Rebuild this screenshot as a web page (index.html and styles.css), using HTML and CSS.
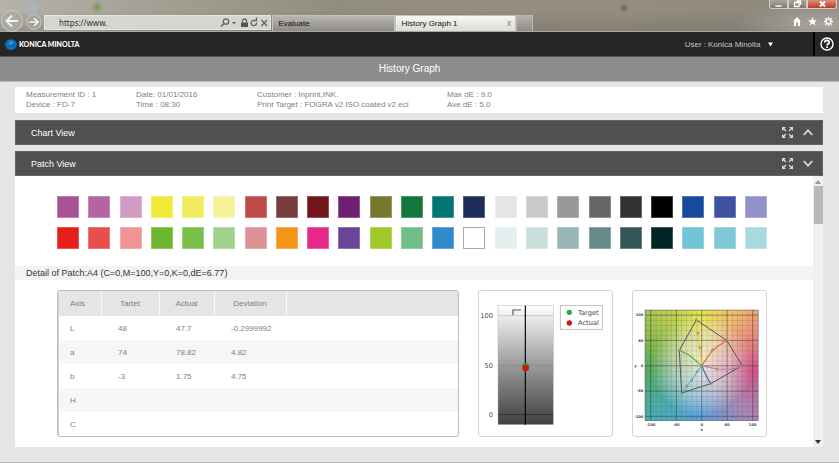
FILE: index.html
```html
<!DOCTYPE html>
<html lang="en">
<head>
<meta charset="utf-8">
<title>History Graph</title>
<link rel="stylesheet" href="styles.css">
</head>
<body>
<header class="chrome">
  <div class="window-buttons">
    <button class="win" aria-label="Minimize"><svg width="17" height="9"><path d="M5 5h7v2h-7z" fill="#fff" stroke="#667" stroke-width=".5"/></svg></button>
    <button class="win" aria-label="Restore"><svg width="17" height="9"><path d="M7.500 1h4v4M5.500 2.500h4.500v4h-4.500z" fill="none" stroke="#fff" stroke-width="1.300"/></svg></button>
    <button class="win win-close" aria-label="Close"><svg width="28" height="9"><path d="M12 1.500l5 5M17 1.500l-5 5" stroke="#fff" stroke-width="2"/></svg></button>
  </div>
  <div class="nav">
    <button class="round back" aria-label="Back"><svg width="22" height="22" viewBox="0 0 22 22"><circle cx="11" cy="11" r="10.500" fill="#aaa9a2" stroke="#cbc9c2"/><path d="M17 11H6M11 5.500L5.500 11l5.500 5.500" fill="none" stroke="#f4f4f0" stroke-width="2"/></svg></button>
    <button class="round" aria-label="Forward"><svg width="16" height="16" viewBox="0 0 16 16"><circle cx="8" cy="8" r="7.300" fill="#a3a29b" stroke="#cbc9c2"/><path d="M3.500 8h8M8 4l4 4-4 4" fill="none" stroke="#f4f4f0" stroke-width="1.600"/></svg></button>
    <div class="address">
      <input type="text" value="https://www." aria-label="Address">
      <svg width="50" height="12" viewBox="0 0 50 12" fill="none" stroke="#66655f" stroke-width="1.300">
        <circle cx="6" cy="4.500" r="2.700"/><path d="M4 6.500L1 9.500" stroke-width="1.600"/>
        <path d="M12 5h4l-2 2.500z" fill="#66655f" stroke="none"/>
        <path d="M21 5.500h7v4.500h-7z" fill="#55544f" stroke="none"/><path d="M22.500 5.500V4a2 2 0 0 1 4 0v1.500"/>
        <path d="M36.500 5.500a2.700 2.700 0 1 1-1.500-2M33.500 3.500h3v-3"/>
        <path d="M41.500 3l5.500 6M47 3l-5.500 6" stroke-width="1.400"/>
      </svg>
    </div>
    <button class="tab">Evaluate</button>
    <button class="tab active">History Graph 1 <span class="tab-close">x</span></button>
    <button class="new-tab" aria-label="New tab"></button>
    <div class="tools">
      <svg width="8" height="9" viewBox="0 0 8 9"><path d="M0 4.500L4 0l4 4.500H7V9H5V5.500H3V9H1V4.500z" fill="#fff"/></svg>
      <svg width="9" height="9" viewBox="0 0 10 10"><path d="M5 0l1.300 3.500H10L7.200 5.800 8.200 9.500 5 7.300 1.800 9.500l1-3.700L0 3.500h3.700z" fill="#fff"/></svg>
      <svg width="9" height="9" viewBox="0 0 10 10" fill="none" stroke="#fff"><circle cx="5" cy="5" r="2.600" stroke-width="1.500"/><path d="M5 0v2M5 8v2M0 5h2M8 5h2M1.300 1.300l1.500 1.500M7.200 7.200l1.500 1.500M1.300 8.700l1.500-1.500M7.200 2.800l1.500-1.500" stroke-width="1.500"/></svg>
    </div>
  </div>
</header>

<div class="appbar">
  <svg class="globe" width="12" height="11" viewBox="0 0 12 11"><ellipse cx="6" cy="5.500" rx="5.800" ry="5.200" fill="#0b78c4"/><path d="M1.500 3h9M.5 4.500h11M.5 6.500h11M1.500 8h9" stroke="#0a5b9c" stroke-width=".6"/><ellipse cx="6" cy="4" rx="2.500" ry="1.800" fill="#2c97dc"/></svg>
  <span class="brand">KONICA MINOLTA</span>
  <div class="user">
    <label for="user">User :</label>
    <select id="user"><option>Konica Minolta</option></select>
    <svg width="5" height="5" viewBox="0 0 6 5"><path d="M0 0h6l-3 5z" fill="#fff"/></svg>
  </div>
  <button class="help" aria-label="Help"><svg width="14" height="14" viewBox="0 0 14 14" fill="none" stroke="#fff"><circle cx="7" cy="7" r="6" stroke-width="1.400"/><path d="M4.800 5.600C4.800 2.700 9.300 2.800 9.200 5.400 9.200 6.800 7.100 6.900 7.100 8.500M7.100 9.500v1.600" stroke-width="1.800"/></svg></button>
</div>
<h1 class="title">History Graph</h1>

<main class="page">
  <section class="info">
    <p>Measurement ID : 1<br>Device : FD-7</p>
    <p>Date: 01/01/2016<br>Time : 08:30</p>
    <p>Customer : Inprint,INK.<br>Print Target : FOGRA v2 ISO coated v2 eci</p>
    <p>Max dE : 9.0<br>Ave dE : 5.0</p>
  </section>

  <section class="bar">
    <h2>Chart View</h2>
    <button aria-label="Full screen"><svg width="11" height="11" viewBox="0 0 11 11" fill="#d8d8d8" stroke="#d8d8d8"><path d="M0 0h4L0 4zM11 0v4L7 0zM0 11V7l4 4zM11 11H7l4-4z" stroke="none"/><path d="M1.500 1.500L4 4M9.500 1.500L7 4M1.500 9.500L4 7M9.500 9.500L7 7" stroke-width="1.300"/></svg></button>
    <button aria-label="Expand"><svg width="10" height="7" viewBox="0 0 10 7"><path d="M.7 6L5 1.300 9.300 6" fill="none" stroke="#d8d8d8" stroke-width="1.800"/></svg></button>
  </section>

  <section class="bar">
    <h2>Patch View</h2>
    <button aria-label="Full screen"><svg width="11" height="11" viewBox="0 0 11 11" fill="#d8d8d8" stroke="#d8d8d8"><path d="M0 0h4L0 4zM11 0v4L7 0zM0 11V7l4 4zM11 11H7l4-4z" stroke="none"/><path d="M1.500 1.500L4 4M9.500 1.500L7 4M1.500 9.500L4 7M9.500 9.500L7 7" stroke-width="1.300"/></svg></button>
    <button aria-label="Collapse"><svg width="10" height="7" viewBox="0 0 10 7"><path d="M.7 1L5 5.700 9.300 1" fill="none" stroke="#d8d8d8" stroke-width="1.800"/></svg></button>
  </section>

  <section class="patch">
    <div class="content">
      <ul class="swatches">
        <li style="background:#aa5297"></li><li style="background:#b464a2"></li><li style="background:#d29bc4"></li><li style="background:#efe938"></li><li style="background:#f1ec5e"></li><li style="background:#f6f29a"></li><li style="background:#be4a4a"></li><li style="background:#783c3c"></li><li style="background:#73161b"></li><li style="background:#6f1f70"></li><li style="background:#75782d"></li><li style="background:#13763b"></li><li style="background:#027574"></li><li style="background:#1d2b57"></li><li style="background:#e5e5e3"></li><li style="background:#cacaca"></li><li style="background:#989898"></li><li style="background:#666"></li><li style="background:#313332"></li><li style="background:#030000"></li><li style="background:#19499c"></li><li style="background:#4053a0"></li><li style="background:#9193c8"></li>
      </ul>
      <ul class="swatches">
        <li style="background:#e71f19"></li><li style="background:#e94d4c"></li><li style="background:#f09393"></li><li style="background:#6ab62d"></li><li style="background:#79bf4a"></li><li style="background:#a1d18c"></li><li style="background:#dd9395"></li><li style="background:#f29518"></li><li style="background:#e62887"></li><li style="background:#684598"></li><li style="background:#9fc928"></li><li style="background:#6fbf85"></li><li style="background:#338acb"></li><li class="outlined" style="background:#fff"></li><li style="background:#e4eeee"></li><li style="background:#cadedc"></li><li style="background:#97b5b5"></li><li style="background:#668a88"></li><li style="background:#335757"></li><li style="background:#022625"></li><li style="background:#71c6d6"></li><li style="background:#7fcad6"></li><li style="background:#a8dae2"></li>
      </ul>
      <h3 class="detail">Detail of Patch:A4 (C=0,M=100,Y=0,K=0,dE=6.77)</h3>
      <div class="panels">
        <div class="card table-card">
          <table>
            <colgroup><col class="c-axis"><col class="c-target"><col class="c-actual"><col class="c-dev"><col></colgroup>
            <thead><tr><th>Axis</th><th>Tartet</th><th>Actual</th><th>Deviation</th><th></th></tr></thead>
            <tbody>
              <tr><td>L</td><td>48</td><td>47.7</td><td>-0.2999992</td><td></td></tr>
              <tr><td>a</td><td>74</td><td>78.82</td><td>4.82</td><td></td></tr>
              <tr><td>b</td><td>-3</td><td>1.75</td><td>4.75</td><td></td></tr>
              <tr><td>H</td><td></td><td></td><td></td><td></td></tr>
              <tr><td>C</td><td></td><td></td><td></td><td></td></tr>
            </tbody>
          </table>
        </div>
        <figure class="card">
          <svg class="plot" viewBox="117 33 399 435">
            <defs><linearGradient id="light" x1="0" y1="0" x2="0" y2="1"><stop offset="0" stop-color="#fff"/><stop offset=".5" stop-color="#9a9a9a"/><stop offset="1" stop-color="#404040"/></linearGradient></defs>
            <rect x="174" y="77" width="166" height="357" fill="url(#light)" stroke="#b5b5b5" stroke-width="1.500"/>
            <path d="M174 107h166M174 256h166" stroke="#777" stroke-opacity=".6" stroke-width="1.500"/>
            <path d="M174 404h166" stroke="#222" stroke-width="2"/>
            <path d="M256 77v357" stroke="#000" stroke-width="3.500"/>
            <path d="M219 105V90h24" fill="none" stroke="#555" stroke-width="3.500"/>
            <circle cx="257" cy="260" r="11" fill="#27a52d"/><circle cx="257" cy="264" r="9.500" fill="#cf1518"/>
            <g class="scale"><text x="159" y="114">100</text><text x="159" y="263">50</text><text x="159" y="411">0</text></g>
            <rect x="361" y="77" width="126" height="71" fill="#fff" stroke="#b4b4b4" stroke-width="2.500"/>
            <circle cx="388" cy="97" r="8" fill="#2fae35"/><circle cx="388" cy="129" r="8" fill="#cf1518"/>
            <g class="legend"><text x="414" y="104">Target</text><text x="414" y="136">Actual</text></g>
          </svg>
        </figure>
        <figure class="card">
          <svg class="plot gamut" viewBox="39 33 399 435">
            <defs><pattern id="grid" width="15.270" height="15.220" x="92" y="105" patternUnits="userSpaceOnUse"><path d="M0 0H16M0 0V16" fill="none" stroke="#444" stroke-opacity=".45" stroke-width="1.800"/></pattern></defs>
            <rect x="75" y="90" width="340" height="332" fill="url(#grid)" stroke="#666" stroke-width="1.500"/>
            <path d="M92 90v332M169 90v332M245 90v332M321 90v332M398 90v332M75 105h340M75 181h340M75 257h340M75 333h340M75 409h340" stroke="#333" stroke-opacity=".6" stroke-width="2"/>
            <path d="M229 120L320 181 367 257 272 311 185 339 178 211Z" fill="none" stroke="#555" stroke-width="3"/>
            <g fill="none" stroke-width="3.500">
              <path d="M245 257L239 203 234 160 229 120" stroke="#e3cf3c"/>
              <path d="M245 257L278 210 320 181" stroke="#e8692c"/>
              <path d="M245 257L291 267 338 268 367 257" stroke="#b883a4"/>
              <path d="M245 257L260 290 272 311" stroke="#4a64a8"/>
              <path d="M245 257L232 275 215 300 201 318 185 339" stroke="#58b9c9"/>
              <path d="M245 257L208 226 178 211" stroke="#58ae45"/>
            </g>
            <g fill="#ddd" fill-opacity=".6" stroke="#555" stroke-width="1.500">
              <circle cx="229" cy="120" r="3"/><circle cx="234" cy="160" r="3"/><circle cx="239" cy="203" r="3"/><circle cx="278" cy="210" r="3"/><circle cx="320" cy="181" r="3"/><circle cx="291" cy="267" r="3"/><circle cx="338" cy="268" r="3"/><circle cx="367" cy="257" r="3"/><circle cx="272" cy="311" r="3"/><circle cx="232" cy="275" r="3"/><circle cx="215" cy="300" r="3"/><circle cx="201" cy="318" r="3"/><circle cx="185" cy="339" r="3"/><circle cx="178" cy="211" r="3"/>
            </g>
            <g class="tick end"><text x="70" y="109">100</text><text x="70" y="185">60</text><text x="70" y="261">0</text><text x="70" y="337">-60</text><text x="70" y="413">-100</text><text x="50" y="261">y</text></g>
            <g class="tick"><text x="92" y="438">-100</text><text x="169" y="438">-60</text><text x="245" y="438">0</text><text x="321" y="438">60</text><text x="398" y="438">100</text><text x="245" y="453">x</text></g>
          </svg>
        </figure>
      </div>
    </div>
    <div class="scrollbar">
      <svg width="6" height="4"><path d="M3 0l3 4H0z" fill="#999"/></svg>
      <div class="thumb"></div>
      <svg width="6" height="4"><path d="M0 0h6L3 4z" fill="#333"/></svg>
    </div>
  </section>
</main>
</body>
</html>
```
FILE: styles.css
```css
* { box-sizing: border-box; }

body {
  margin: 0;
  min-height: 100vh;
  display: flex;
  flex-direction: column;
  background: #e5e5e3;
  border-bottom: 1px solid #b5b5b5;
  font-family: "Liberation Sans", Arial, sans-serif;
  font-size: 8px;
  color: #808080;
}

h1, h2, h3, p, ul, figure { margin: 0; padding: 0; font-weight: normal; }
svg { display: block; }
button { margin: 0; padding: 0; border: 0; background: none; font: inherit; color: inherit; }

/* Browser frame */
.chrome {
  height: 32px;
  display: flex;
  flex-direction: column;
  background:
    radial-gradient(circle at 97px 7px, #6f9a52 0, transparent 6px),
    radial-gradient(circle at 32px 9px, #a9b6c4 0, transparent 8px),
    radial-gradient(circle at 624px 8px, #6b655a 0, transparent 5px),
    radial-gradient(ellipse 90px 24px at 98% 80%, #a8a79f 0, transparent),
    linear-gradient(transparent 35%, rgba(100, 98, 90, .35)),
    linear-gradient(90deg, #b5b2a8 0, #a19c90 22%, #938d80 40%, #958d80 75%, #8b867b 100%);
  border-bottom: 1px solid #aaa8a0;
}
.window-buttons { height: 9px; display: flex; justify-content: flex-end; padding-right: 2px; }
.win { height: 9px; border: 1px solid #d0ccc6; border-top: 0; background: linear-gradient(#aaa69f, #807b74); overflow: hidden; }
.win:first-child { border-bottom-left-radius: 3px; }
.win-close { background: linear-gradient(#d99080, #c03a20); border-bottom-right-radius: 3px; }
.nav { flex: 1; display: flex; align-items: flex-end; }
.round { margin: 0 2px 1px 0; }
.back { margin: 0 3px 0 1px; align-self: flex-end; height: 21px; }
.address {
  width: 27%;
  height: 15px;
  margin: 0 1px 1px 0;
  display: flex;
  align-items: center;
  background: #d6d5d0;
  border: 1px solid #e6e5e0;
}
.address input { flex: 1; min-width: 0; padding: 0 0 0 14px; border: 0; background: none; font: 8px "Noto Sans", sans-serif; color: #333; }
.tab {
  width: 123px;
  height: 16px;
  padding: 0 6px;
  display: flex;
  align-items: center;
  justify-content: space-between;
  border: 1px solid #c4c2bc;
  border-bottom: 0;
  background: linear-gradient(#b9b7b1, #8d8b84);
  font: 8px "Liberation Sans", sans-serif;
  color: #111;
}
.tab.active { width: 121px; padding: 0 3px 0 6px; background: linear-gradient(#f6f6f4, #dcdbd7); }
.tab-close { color: #888; font-family: "DejaVu Sans", sans-serif; }
.new-tab { width: 17px; height: 16px; background: linear-gradient(#b5b3ad, #8d8b84); border: 1px solid #b9b7b0; border-bottom: 0; }
.tools { margin-left: auto; align-self: center; display: flex; gap: 7px; padding: 2px 6px 0 0; }

/* Application bars */
.appbar { height: 25px; display: flex; align-items: center; background: #262626; border-bottom: 1px solid #555; }
.globe { margin: 0 2px 0 5px; }
.brand { font: 900 7px Lato, sans-serif; color: #fff; }
.user { margin-left: auto; margin-right: 40px; display: flex; align-items: center; color: #c4c4c4; }
.user select { appearance: none; margin: 0 7px 0 2px; padding: 0; border: 0; background: none; font: inherit; color: inherit; }
.help { height: 24px; width: 26px; display: grid; place-items: center; border-left: 2px solid #000; }
.title { height: 25px; padding-right: 20px; line-height: 24px; text-align: center; font-size: 10px; color: #fff; background: #8c8c8c; border-bottom: 1px solid #b8b8b6; }

/* Page */
.page { padding: 5px 16px 15px 15px; display: flex; flex-direction: column; flex: 1; }
.info {
  height: 26px;
  margin-bottom: 7px;
  padding: 3px 11px;
  display: grid;
  grid-template-columns: 110px 121px 190px 1fr;
  background: #fff;
  line-height: 10px;
}
.bar {
  height: 25px;
  margin-bottom: 6px;
  padding: 0 9px 0 15px;
  display: flex;
  align-items: center;
  gap: 10px;
  background: #514f4f;
  border: 1px solid #656363;
  color: #fff;
}
.bar h2 { margin-right: auto; font-size: 9px; }
.bar:nth-of-type(3) { margin-bottom: 0; }

.patch { flex: 1; display: flex; background: #fff; }
.content { flex: 1; min-width: 0; padding-top: 20px; }
.swatches { display: flex; justify-content: space-between; list-style: none; margin: 0 46px 9px 42px; }
.swatches li { width: 22px; height: 22px; border: 1px solid rgba(255, 255, 255, .25); }
.swatches .outlined { border-color: #aaa; }
.detail { margin-top: 17px; padding-left: 11px; height: 14px; line-height: 15px; font-size: 9px; color: #333; background: #f3f3f3; }

.panels { display: grid; grid-template-columns: 1fr 135px 135px; gap: 19px; margin: 10px 46px 10px 42px; }
.card { border: 1px solid #d4d4d4; border-radius: 3px; overflow: hidden; }
.table-card { border: 1px solid #bbbdbe; box-shadow: inset 1px 0 #d0d2d3; padding-left: 1px; }
table { width: 100%; border-collapse: collapse; table-layout: fixed; color: #808080; }
.c-axis { width: 42px; }
.c-target { width: 58px; }
.c-actual { width: 55px; }
.c-dev { width: 72px; }
th { height: 25px; padding: 0; font-weight: normal; background: #e5e5e3; border-right: 1px solid #f8f8f8; }
th:first-child { text-align: left; padding-left: 11px; }
th:last-child { border-right: 0; }
td { height: 24px; padding: 0 0 0 17px; }
td:first-child { padding-left: 11px; }
tbody tr:nth-child(even) { background: #f6f6f6; }

.plot { width: 100%; height: 145px; }
.plot text { font-family: "DejaVu Sans", sans-serif; fill: #444; }
.scale { font-size: 20px; text-anchor: end; }
.legend { font-size: 20px; }
.tick { font-size: 11px; font-weight: bold; text-anchor: middle; }
.tick.end { text-anchor: end; }
.gamut {
  background:
    radial-gradient(ellipse closest-side, rgba(246, 238, 222, .9) 0, rgba(235, 232, 222, .6) 50%, transparent 90%) 12px 19px / 113px 111px no-repeat,
    conic-gradient(#e6e552, #efc26c 30deg, #efa577 45deg, #e27a84 72deg, #d4548c 95deg, #a987b4 135deg, #7d97cc 160deg, #57a3dc 185deg, #48aeb0 225deg, #55ab62 265deg, #7db850 290deg, #aac850 315deg, #e6e552) 12px 19px / 113px 111px no-repeat;
}

.scrollbar { width: 10px; padding: 4px 0 3px; display: flex; flex-direction: column; align-items: center; gap: 2px; background: #f0f0f0; }
.thumb { width: 9px; height: 38px; margin-bottom: auto; background: #b9b9b9; }
```
